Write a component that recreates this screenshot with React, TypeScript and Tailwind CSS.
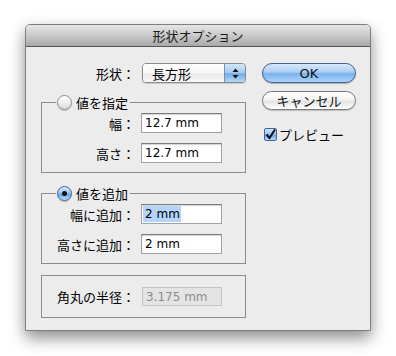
import React from "react";

type FieldProps = {
  value: string;
  selected?: boolean;
  disabled?: boolean;
};

function Field({ value, selected, disabled }: FieldProps) {
  if (disabled) {
    return (
      <div className="ml-[7px] w-[80px] h-[19px] flex items-center pl-[3px] bg-[#e4e4e4] border border-[#c4c4c4] text-[#8c8c8c] text-[12px] font-['DejaVu_Sans','Noto_Sans_CJK_JP',sans-serif]">
        {value}
      </div>
    );
  }
  return (
    <div className="ml-[6px] w-[81px] h-[20px] flex items-stretch pl-[1px] py-[1px] bg-white border border-[#a2a2a2] border-t-[#7c7c7c] shadow-[inset_0_1px_1px_rgba(0,0,0,0.18)] text-[12px] text-black font-['DejaVu_Sans','Noto_Sans_CJK_JP',sans-serif]">
      <span
        className={
          selected
            ? "flex items-center pl-[2px] pr-[1px] bg-[#b4d4fd]"
            : "flex items-center pl-[2px]"
        }
      >
        {value}
      </span>
    </div>
  );
}

function Radio({ on }: { on?: boolean }) {
  if (on) {
    return (
      <span className="w-[15px] h-[15px] rounded-full flex items-center justify-center border border-[#41649c] bg-[linear-gradient(180deg,#d4e7fb_0%,#9cc6f0_45%,#6aa6e6_55%,#b6dcfc_100%)] shadow-[0_1px_1px_rgba(0,0,0,0.25)]">
        <span className="w-[5px] h-[5px] rounded-full bg-[#111]" />
      </span>
    );
  }
  return (
    <span className="w-[15px] h-[15px] rounded-full border border-[#8e8e8e] bg-[linear-gradient(180deg,#ffffff_0%,#f0f0f0_50%,#d8d8d8_100%)] shadow-[0_1px_1px_rgba(0,0,0,0.2)]" />
  );
}

function Row({ label, children }: { label: string; children: React.ReactNode }) {
  return (
    <div className="flex items-center h-[20px]">
      <span className="w-[93px] text-right whitespace-nowrap">{label}</span>
      {children}
    </div>
  );
}

export default function App() {
  return (
    <div className="w-[396px] h-[356px] bg-white pt-[24px] pl-[25px] font-['Noto_Sans_CJK_JP',sans-serif] text-[13px] leading-none text-black">
      <div className="w-[346px] h-[307px] flex flex-col bg-[#ececec] rounded-t-[5px] border border-[#7e7e7e] shadow-[0_7px_16px_rgba(0,0,0,0.45)]">
        <div className="h-[22px] shrink-0 flex items-center justify-center rounded-t-[4px] bg-[linear-gradient(180deg,#e6e6e6_0%,#c9c9c9_50%,#a9a9a9_100%)] border-b border-[#555] text-[#1c1c1c]">
          形状オプション
        </div>

        <div className="flex pl-[15px] pt-[16px]">
          {/* left column */}
          <div className="w-[205px] flex flex-col">
            <div className="flex items-center h-[20px]">
              <span className="w-[94px] text-right">形状：</span>
              <div className="ml-[7px] w-[104px] h-[20px] flex rounded-[4px] border border-[#8a8a8a] overflow-hidden shadow-[0_1px_1px_rgba(0,0,0,0.15)]">
                <div className="flex-1 flex items-center pl-[9px] bg-[linear-gradient(180deg,#ffffff_0%,#f6f6f6_50%,#e9e9e9_55%,#f8f8f8_100%)]">
                  長方形
                </div>
                <div className="w-[21px] flex items-center justify-center border-l border-[#7a8fae] bg-[linear-gradient(180deg,#d3e6fa_0%,#a4caf1_48%,#74aae6_55%,#b2d8fb_100%)]">
                  <svg width="7" height="11" viewBox="0 0 7 11">
                    <path d="M3.5 0.5 L6.5 4 L0.5 4 Z" fill="#111" />
                    <path d="M3.5 10.5 L6.5 7 L0.5 7 Z" fill="#111" />
                  </svg>
                </div>
              </div>
            </div>

            <fieldset className="mt-[11px] border border-[#8c8c8c] pt-[3px] pb-[9px]">
              <legend className="ml-[14px] px-[1px] pr-[2px]">
                <span className="flex items-center h-[16px] gap-[4px]">
                  <Radio />
                  値を指定
                </span>
              </legend>
              <Row label="幅：">
                <Field value="12.7 mm" />
              </Row>
              <div className="mt-[10px]">
                <Row label="高さ：">
                  <Field value="12.7 mm" />
                </Row>
              </div>
            </fieldset>

            <fieldset className="mt-[12px] border border-[#8c8c8c] pt-[3px] pb-[9px]">
              <legend className="ml-[14px] px-[1px] pr-[2px]">
                <span className="flex items-center h-[16px] gap-[4px]">
                  <Radio on />
                  値を追加
                </span>
              </legend>
              <Row label="幅に追加：">
                <Field value="2 mm" selected />
              </Row>
              <div className="mt-[10px]">
                <Row label="高さに追加：">
                  <Field value="2 mm" />
                </Row>
              </div>
            </fieldset>

            <div className="mt-[11px] border border-[#8c8c8c] pt-[11px] pb-[11px]">
              <div className="flex items-center h-[19px]">
                <span className="w-[93px] text-right">角丸の半径：</span>
                <Field value="3.175 mm" disabled />
              </div>
            </div>
          </div>

          {/* right column */}
          <div className="ml-[16px] w-[94px] flex flex-col">
            <button className="h-[20px] rounded-full border border-[#3f5f96] bg-[linear-gradient(180deg,#d8e9fb_0%,#aacdf3_45%,#7bb2ea_55%,#a9d5fb_100%)] shadow-[0_1px_1px_rgba(0,0,0,0.25)] font-['DejaVu_Sans',sans-serif] text-[13px] text-[#111]">
              OK
            </button>
            <button className="mt-[8px] h-[19px] rounded-full border border-[#7c7c7c] bg-[linear-gradient(180deg,#ffffff_0%,#f4f4f4_45%,#e4e4e4_55%,#ffffff_100%)] shadow-[0_1px_1px_rgba(0,0,0,0.2)] text-[#111]">
              キャンセル
            </button>
            <div className="mt-[16px] h-[16px] flex items-center pl-[2px] gap-[2px]">
              <span className="w-[13px] h-[13px] rounded-[2px] border border-[#40639b] bg-[linear-gradient(180deg,#d4e7fb_0%,#9cc6f0_45%,#6aa6e6_55%,#b6dcfc_100%)] flex items-center justify-center">
                <svg width="11" height="11" viewBox="0 0 11 11">
                  <path d="M1.5 5.5 L4.5 9 L10 0.5" fill="none" stroke="#111" strokeWidth="2" />
                </svg>
              </span>
              プレビュー
            </div>
          </div>
        </div>
      </div>
    </div>
  );
}
